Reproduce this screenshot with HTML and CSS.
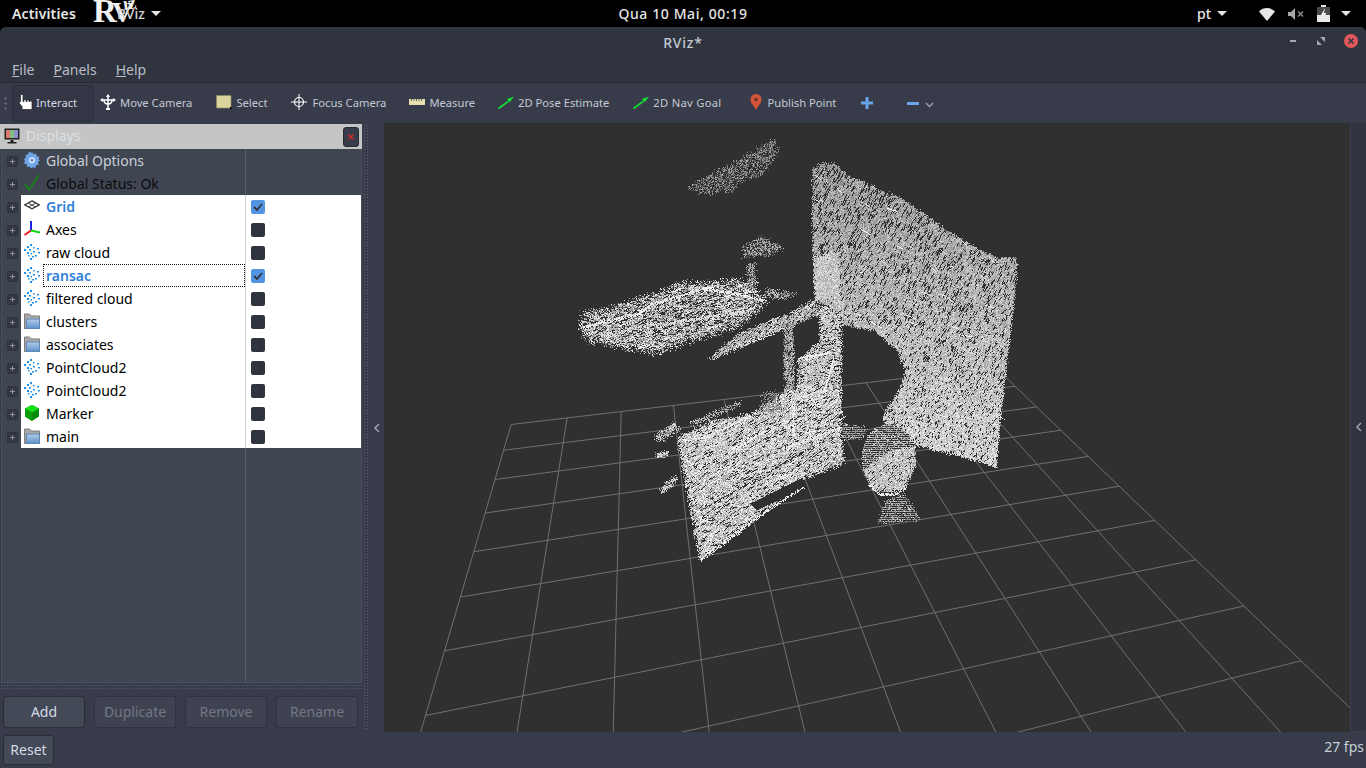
FILE: index.html
```html
<!DOCTYPE html>
<html lang="pt">
<head>
<meta charset="utf-8">
<title>RViz*</title>
<link rel="stylesheet" href="styles.css">
</head>
<body>
<svg class="defs" width="0" height="0" aria-hidden="true">
  <defs>
    <linearGradient id="g-folder" x1="0" y1="0" x2="0" y2="1"><stop offset="0" stop-color="#b4cbe6"/><stop offset="1" stop-color="#5c92cf"/></linearGradient>
  </defs>
  <symbol id="i-cloud" viewBox="0 0 16 16">
    <g fill="#1e90ee">
      <rect x="6" y="0" width="2" height="2"/><rect x="3" y="2" width="2" height="2"/><rect x="9" y="3" width="1.500" height="1.500"/><rect x="13" y="4" width="2" height="1.500"/>
      <rect x="0" y="5" width="2" height="2"/><rect x="5" y="5" width="2" height="1.500"/><rect x="14" y="8" width="2" height="1.500"/><rect x="9" y="7" width="2" height="1.500"/>
      <rect x="3" y="8" width="2" height="2"/><rect x="6.500" y="9" width="1.500" height="1.500"/><rect x="11" y="11" width="2" height="1.500"/><rect x="4" y="11" width="1.500" height="1.500"/><rect x="8" y="12" width="2" height="1.500"/><rect x="6" y="14" width="2" height="2"/>
    </g>
  </symbol>
  <symbol id="i-folder" viewBox="0 0 16 16">
    <path d="M0.500 1h5l1.500 2h8.500v12.500h-15z" fill="#a9a9a9" stroke="#7b7b7b"/>
    <rect x="2.500" y="6" width="13" height="9.500" fill="url(#g-folder)" stroke="#5f86b3"/>
  </symbol>
</svg>

<header class="topbar">
  <span class="tb-activities">Activities</span>
  <span class="tb-app">
    <span class="tb-logo"><span class="l-r">R</span><span class="l-v">V</span><span class="l-iz">iz</span></span>
    <span class="tb-appname">RViz</span>
    <span class="caret"></span>
  </span>
  <span class="tb-clock">Qua 10 Mai, 00:19</span>
  <span class="tb-right">
    <span class="tb-lang">pt</span>
    <span class="caret"></span>
    <svg class="ic-wifi" width="16" height="14" viewBox="0 0 16 14"><path d="M0 4.500A11 11 0 0 1 16 4.500L8 14z" fill="#e6e6e6"/></svg>
    <svg class="ic-vol" width="18" height="14" viewBox="0 0 18 14"><path d="M1 5h3l4-4v12l-4-4h-3z" fill="#a8a8a8"/><path d="M11 4.500l5 5m0-5l-5 5" stroke="#8a8a8a" stroke-width="1.500"/></svg>
    <svg class="ic-bat" width="13" height="17" viewBox="0 0 13 17"><path d="M4 0h5v2h4v15h-13v-15h4z" fill="#e8e8e8"/><path d="M0 2h13v8h-13z" fill="#4a4a4a"/><path d="M8 3l-4 7h2.500l-1.500 5 4.500-7h-2.500z" fill="#ededed"/></svg>
    <span class="caret"></span>
  </span>
</header>

<div class="window">
  <div class="titlebar">
    <span class="title">RViz*</span>
    <div class="winbtns">
      <span class="wb-min"></span>
      <svg class="wb-max" width="8" height="8" viewBox="0 0 8 8"><path d="M8 0v5l-5-5zM0 8v-5l5 5z" fill="#a5a8b0"/></svg>
      <svg class="wb-close" width="14" height="14" viewBox="0 0 14 14"><circle cx="7" cy="7" r="7" fill="#e0575b"/><path d="M4.500 4.500l5 5m0-5l-5 5" stroke="#2f343f" stroke-width="1.600"/></svg>
    </div>
  </div>
  <nav class="menubar">
    <span class="menu"><u>F</u>ile</span>
    <span class="menu"><u>P</u>anels</span>
    <span class="menu"><u>H</u>elp</span>
  </nav>
  <div class="toolbar">
    <span class="grip"></span>
    <span class="tool active">
      <svg width="16" height="16" viewBox="0 0 16 16"><path d="M3.500 .5h2.500v7h1v-2h2v2h1v-1.500h2v1.500h1v-.5h2v8.500h-10v-3l-2.500-3v-2h1z" fill="#fff" stroke="#222" stroke-width=".7"/></svg>
      Interact
    </span>
    <span class="tool">
      <svg width="16" height="16" viewBox="0 0 16 16"><path d="M8 1v14M1 6h14M4 6c0 3 2 4 4 4s4-1 4-4" fill="none" stroke="#fff" stroke-width="1.500"/><path d="M8 0l2 3h-4zM0 6l3-2v4zM16 6l-3-2v4z" fill="#fff"/><rect x="6" y="14" width="4" height="2" fill="#fff"/></svg>
      Move Camera
    </span>
    <span class="tool">
      <svg width="16" height="16" viewBox="0 0 16 16"><rect x=".5" y="1.500" width="14.500" height="12.500" fill="#d9d59c" stroke="#8d8a66" stroke-dasharray="2 1"/><rect x="14" y="13" width="2" height="2" fill="#111"/></svg>
      Select
    </span>
    <span class="tool gap5">
      <svg width="16" height="16" viewBox="0 0 16 16"><circle cx="8" cy="8" r="4.500" fill="none" stroke="#fff" stroke-width="1.200"/><path d="M8 0v16M0 8h16" stroke="#fff"/></svg>
      Focus Camera
    </span>
    <span class="tool tight">
      <svg width="16" height="16" viewBox="0 0 16 16"><rect x="0" y="5" width="16" height="6" fill="#e6dfae"/><path d="M2.500 5v2M5 5v2M7.500 5v2M10 5v2M12.500 5v2" stroke="#6d6a50"/></svg>
      Measure
    </span>
    <span class="tool">
      <svg width="16" height="16" viewBox="0 0 16 16"><path d="M0.500 14.500L10 7.500" stroke="#12e030" stroke-width="1.600"/><path d="M16 2.500l-7 2.500 2.500 3.500z" fill="#12e030"/></svg>
      2D Pose Estimate
    </span>
    <span class="tool wide">
      <svg width="16" height="16" viewBox="0 0 16 16"><path d="M0.500 14.500L10 7.500" stroke="#12e030" stroke-width="1.600"/><path d="M16 2.500l-7 2.500 2.500 3.500z" fill="#12e030"/></svg>
      2D Nav Goal
    </span>
    <span class="tool pin">
      <svg width="14" height="16" viewBox="0 0 14 16"><path d="M7 0a5.500 5.500 0 0 1 5.500 5.500c0 4-3.500 6-5.500 10.500c-2-4.500-5.500-6.500-5.500-10.500a5.500 5.500 0 0 1 5.500-5.500z" fill="#d2553a"/><circle cx="7" cy="5.500" r="1.800" fill="#6b3526"/></svg>
      Publish Point
    </span>
    <svg class="tb-plus" width="12" height="12" viewBox="0 0 12 12"><path d="M6 0v12M0 6h12" stroke="#6aa5ea" stroke-width="3"/></svg>
    <span class="tb-minus"></span>
    <svg class="tb-chev" width="9" height="6" viewBox="0 0 9 6"><path d="M1 1l3.500 3.500L8 1" fill="none" stroke="#9aa0ad" stroke-width="1.300"/></svg>
  </div>

  <div class="main">
    <aside class="dock">
      <div class="dock-head">
        <svg width="16" height="16" viewBox="0 0 16 16"><rect x="0.500" y="0.500" width="15" height="11" fill="#222"/><rect x="2" y="2" width="4" height="8" fill="#d87a70"/><rect x="6" y="2" width="4" height="8" fill="#83bd78"/><rect x="10" y="2" width="4" height="8" fill="#8a8fd0"/><rect x="6.500" y="12" width="3" height="2" fill="#222"/><rect x="3.500" y="14" width="9" height="1.500" fill="#222"/></svg>
        <span class="dock-title">Displays</span>
        <span class="dock-close"><svg width="6" height="6" viewBox="0 0 6 6"><path d="M.5.500l5 5m0-5l-5 5" stroke="#d82c2c" stroke-width="1.300"/></svg></span>
      </div>
      <div class="tree">
        <div class="row"><span class="gutter"><span class="exp"></span></span><span class="name">
          <svg class="ico" width="14" height="14" viewBox="0 0 14 14"><path d="M7 0l1.300 2 2.300-.6.500 2.300 2.300.5-.6 2.300L14 7.300l-1.800 1.500.6 2.300-2.300.5-.5 2.300-2.300-.6L6 14.600 5 12.600l-2.300.5-.3-2.300-2.300-.8.800-2.200L0 6.300l1.800-1.500-.5-2.300 2.300-.4.600-2.200 2.200.8z" fill="#6ea6e6"/><circle cx="7" cy="7.200" r="2.700" fill="#dbe8f7"/><circle cx="7" cy="7.200" r="1.300" fill="#5b8fd0"/></svg>
          <span class="lbl lt">Global Options</span></span><span class="cell"></span></div>
        <div class="row"><span class="gutter"><span class="exp"></span></span><span class="name">
          <svg class="ico" width="14" height="14" viewBox="0 0 14 14"><path d="M1 8l3.500 5L13 0" fill="none" stroke="#1f7a22" stroke-width="1.800"/></svg>
          <span class="lbl blk">Global Status: Ok</span></span><span class="cell"></span></div>
        <div class="row on"><span class="gutter"><span class="exp"></span></span><span class="name">
          <svg class="ico" width="14" height="14" viewBox="0 0 14 14"><path d="M7 2.500l6.500 3.500L7 9.500.5 6z" fill="none" stroke="#333" stroke-width="1.100"/><path d="M4 4.500l6 3.200M10 4.500L4 7.700" stroke="#333" stroke-width=".8"/></svg>
          <span class="lbl blue">Grid</span></span><span class="cell"><span class="chk yes"><svg width="10" height="8" viewBox="0 0 10 8"><path d="M1 4l3 3 5-6" fill="none" stroke="#2f343f" stroke-width="1.800"/></svg></span></span></div>
        <div class="row on"><span class="gutter"><span class="exp"></span></span><span class="name">
          <svg class="ico" width="16" height="16" viewBox="0 0 16 16"><path d="M7 9.500V0" stroke="#2020e0" stroke-width="2"/><path d="M7 9.500L.5 14" stroke="#e81818" stroke-width="2"/><path d="M7 9.500l9 2" stroke="#10d810" stroke-width="2"/></svg>
          <span class="lbl">Axes</span></span><span class="cell"><span class="chk"></span></span></div>
        <div class="row on"><span class="gutter"><span class="exp"></span></span><span class="name"><svg class="ico" width="16" height="16"><use href="#i-cloud"/></svg><span class="lbl">raw cloud</span></span><span class="cell"><span class="chk"></span></span></div>
        <div class="row on"><span class="gutter"><span class="exp"></span></span><span class="name"><svg class="ico" width="16" height="16"><use href="#i-cloud"/></svg><span class="lbl blue focus">ransac</span></span><span class="cell"><span class="chk yes"><svg width="10" height="8" viewBox="0 0 10 8"><path d="M1 4l3 3 5-6" fill="none" stroke="#2f343f" stroke-width="1.800"/></svg></span></span></div>
        <div class="row on"><span class="gutter"><span class="exp"></span></span><span class="name"><svg class="ico" width="16" height="16"><use href="#i-cloud"/></svg><span class="lbl">filtered cloud</span></span><span class="cell"><span class="chk"></span></span></div>
        <div class="row on"><span class="gutter"><span class="exp"></span></span><span class="name"><svg class="ico" width="16" height="16"><use href="#i-folder"/></svg><span class="lbl">clusters</span></span><span class="cell"><span class="chk"></span></span></div>
        <div class="row on"><span class="gutter"><span class="exp"></span></span><span class="name"><svg class="ico" width="16" height="16"><use href="#i-folder"/></svg><span class="lbl">associates</span></span><span class="cell"><span class="chk"></span></span></div>
        <div class="row on"><span class="gutter"><span class="exp"></span></span><span class="name"><svg class="ico" width="16" height="16"><use href="#i-cloud"/></svg><span class="lbl">PointCloud2</span></span><span class="cell"><span class="chk"></span></span></div>
        <div class="row on"><span class="gutter"><span class="exp"></span></span><span class="name"><svg class="ico" width="16" height="16"><use href="#i-cloud"/></svg><span class="lbl">PointCloud2</span></span><span class="cell"><span class="chk"></span></span></div>
        <div class="row on"><span class="gutter"><span class="exp"></span></span><span class="name">
          <svg class="ico" width="16" height="16" viewBox="0 0 16 16"><path d="M8 0l7 3.500v8L8 16l-7-4.500v-8z" fill="#0a8a0a"/><path d="M8 0l7 3.500L8 7.500 1 3.500z" fill="#16e016"/><path d="M8 7.500V16l-7-4.500v-8z" fill="#0c9c0c"/></svg>
          <span class="lbl">Marker</span></span><span class="cell"><span class="chk"></span></span></div>
        <div class="row on"><span class="gutter"><span class="exp"></span></span><span class="name"><svg class="ico" width="16" height="16"><use href="#i-folder"/></svg><span class="lbl">main</span></span><span class="cell"><span class="chk"></span></span></div>
        <div class="row filler"><span class="gutter"></span><span class="name"></span><span class="cell"></span></div>
      </div>
      <div class="hgrip"></div>
      <div class="dock-btns">
        <button class="btn primary">Add</button>
        <button class="btn off">Duplicate</button>
        <button class="btn off">Remove</button>
        <button class="btn off">Rename</button>
      </div>
    </aside>
    <div class="splitter"><span class="vgrip"></span><span class="strip"><svg width="7" height="10" viewBox="0 0 7 10"><path d="M6 1L2 5l4 4" fill="none" stroke="#9aa0ad" stroke-width="1.600"/></svg></span></div>
    <canvas id="view" class="view" width="966" height="609"></canvas>
    <div class="rstrip"><svg width="7" height="10" viewBox="0 0 7 10"><path d="M6 1L2 5l4 4" fill="none" stroke="#9aa0ad" stroke-width="1.600"/></svg></div>
  </div>

  <footer class="status">
    <button class="btn primary reset">Reset</button>
    <span class="fps">27 fps</span>
  </footer>
</div>
<script src="view.js"></script>
</body>
</html>
```
FILE: styles.css
```css
* { box-sizing: border-box; }
html, body { margin: 0; height: 100%; }
body {
  width: 1366px; height: 768px; overflow: hidden; background: #000;
  font-family: "Noto Sans", "Open Sans", sans-serif; color: #d3dae3;
  display: flex; flex-direction: column;
}
.defs { position: absolute; }

.topbar {
  height: 27px; flex: none; background: #000; color: #e6e6e6; position: relative;
  display: flex; align-items: center; font-size: 14px; font-weight: 600; padding-left: 12px;
}
.tb-activities { letter-spacing: .15px; }
.tb-app { position: relative; display: flex; align-items: center; margin-left: 41px; }
.tb-appname { font-weight: 500; color: #d5d5d5; font-size: 14px; position: relative; }
.tb-logo {
  position: absolute; left: -24px; top: -11px; width: 46px; height: 27px; display: block; white-space: nowrap;
  font-family: "Liberation Serif", serif; font-weight: 700; color: #f2f2f2;
}
.l-r { font-size: 33px; }
.l-v { font-size: 30px; margin-left: -5px; }
.l-iz { font-size: 18px; position: absolute; left: 30px; top: 0; transform: rotate(-8deg); }
.caret {
  width: 0; height: 0; border-left: 5px solid transparent; border-right: 5px solid transparent;
  border-top: 5px solid #e6e6e6; margin-left: 6px; display: inline-block;
}
.tb-clock { position: absolute; left: 0; right: 0; text-align: center; font-weight: 500; letter-spacing: .6px; pointer-events: none; }
.tb-right { margin-left: auto; display: flex; align-items: center; padding-right: 15px; position: relative; }
.tb-lang { font-weight: 500; }
.ic-wifi { margin-left: 32px; }
.ic-vol { margin-left: 12px; }
.ic-bat { margin-left: 12px; }
.tb-right .caret:last-child { margin-left: 11px; }

.window { flex: 1; display: flex; flex-direction: column; background: #383c4a; border-radius: 6px 6px 0 0; overflow: hidden; min-height: 0; }
.titlebar { height: 30px; flex: none; background: #2f343f; position: relative; display: flex; align-items: center; justify-content: center; }
.title { font-size: 14px; font-weight: 500; color: #c4c9d2; letter-spacing: .8px; }
.winbtns { position: absolute; right: 8px; top: 7px; display: flex; align-items: center; }
.wb-min { width: 6px; height: 2px; background: #a5a8b0; }
.wb-max { margin-left: 21px; }
.wb-close { margin-left: 19px; }
.menubar { height: 25px; flex: none; background: #2f343f; display: flex; align-items: center; padding-left: 12px; font-size: 14px; gap: 19px; }
.menu { color: #b9bec8; }
.toolbar {
  height: 41px; flex: none; background: #383c4a; border-top: 1px solid #262a33;
  display: flex; align-items: center; padding-left: 4px; font-size: 11.200px; color: #c3cad5; position: relative;
}
.grip { width: 3px; height: 14px; margin-right: 5px; background: radial-gradient(circle, #5d6270 1px, transparent 1.200px) 0 0 / 3px 5px; }
.tool { display: flex; align-items: center; gap: 4px; height: 37px; padding: 0 12px 2px; white-space: nowrap; }
.tool.active { width: 82px; padding: 0 0 2px 4px; gap: 3px; background: #333745; border: 1px solid #2b2f3b; border-radius: 3px; margin-right: -6px; color: #d3dae3; }
.tool.gap5 { gap: 5px; padding-right: 11px; }
.tool.tight { padding-right: 11px; }
.tool.wide { letter-spacing: .3px; }
.tool.pin { padding: 0 12px 2px 15px; gap: 5px; }
.tb-plus { margin-left: 13px; }
.tb-minus { width: 12px; height: 3px; background: #6aa5ea; margin-left: 34px; }
.tb-chev { margin-left: 6px; margin-top: 3px; }

.main { height: 609px; flex: none; display: flex; }
.dock { width: 362px; flex: none; display: flex; flex-direction: column; }
.dock-head { height: 25px; flex: none; background: #c5c5c5; margin-top: 1px; display: flex; align-items: center; padding: 0 0 2px 4px; position: relative; }
.dock-title { font-size: 14px; color: #dbe0e6; margin-left: 6px; }
.dock-close { width: 16px; height: 20px; margin: 2px 3px 0 auto; background: #383c4a; border: 1px solid #262a33; border-radius: 3px; display: flex; align-items: center; justify-content: center; }
.tree { flex: 1; min-height: 0; margin-left: 1px; background: #404552; border: solid #4a4f5f; border-width: 0 1px 1px 1px; display: flex; flex-direction: column; width: 361px; }
.row { height: 23px; flex: none; display: flex; font-size: 14px; }
.row.filler { flex: 1; height: auto; }
.gutter { width: 19px; flex: none; background: #404552; display: flex; align-items: center; padding-left: 5px; }
.exp { width: 11px; height: 11px; margin-top: 1px; background: #333744; border-radius: 2px; position: relative; border: 1px solid #2f3340; }
.exp::before { content: ""; position: absolute; left: 2px; top: 4px; width: 5px; height: 1px; background: #8c919e; }
.exp::after { content: ""; position: absolute; left: 4px; top: 2px; width: 1px; height: 5px; background: #8c919e; }
.name { width: 224px; flex: none; display: flex; align-items: center; position: relative; padding-left: 3px; color: #000; }
.ico { flex: none; width: 16px; height: 16px; margin-top: -2px; }
.lbl { margin-left: 6px; white-space: nowrap; }
.lt { color: #c9d0da; }
.blk { color: #0c0c0c; }
.blue { color: #2f80d8; font-weight: 600; }
.focus::after { content: ""; position: absolute; left: 22px; right: 0; top: 0; bottom: 0; border: 1px dotted #111; }
.cell { flex: 1; border-left: 1px solid #565b69; display: flex; align-items: center; padding-left: 5px; }
.on .name, .on .cell { background: #fff; }
.on .cell { border-left-color: #d4d4d4; }
.chk { width: 14px; height: 14px; background: #2f343f; border-radius: 2px; display: flex; align-items: center; justify-content: center; }
.chk.yes { background: #5294e2; }
.hgrip { height: 5px; flex: none; margin: 1px 0 0 0; background: radial-gradient(circle, #5a5f70 .7px, transparent 1px) 0 0 / 3px 3px; }
.dock-btns { height: 43px; flex: none; display: flex; gap: 9px; padding: 7px 0 0 3px; }
.btn { height: 32px; width: 82px; font: 14px "Noto Sans", "Open Sans", sans-serif; border-radius: 3px; padding: 0 0 1px; }
.primary { background: #444958; border: 1px solid #2b2e39; color: #d3dae3; }
.off { background: #3e4251; border: 1px solid #2f3240; color: #727884; }

.splitter { width: 22px; flex: none; display: flex; }
.vgrip { width: 5px; margin-top: 1px; margin-bottom: 2px; margin-left: 1px; background: radial-gradient(circle, #5a5f70 .7px, transparent 1px) 0 0 / 3px 3px; }
.strip { flex: 1; display: flex; align-items: center; justify-content: center; }
.view { width: 966px; height: 609px; flex: none; display: block; background: #303030; }
.rstrip { flex: 1; background: #303441; border: 1px solid #3c4150; border-width: 0 0 1px 1px; border-radius: 0 0 3px 3px; display: flex; align-items: center; justify-content: center; }

.status { height: 36px; flex: none; display: flex; align-items: center; padding: 0 2px 0 3px; justify-content: space-between; }
.reset { width: 51px; height: 30px; }
.fps { font-size: 14px; color: #c9d0da; margin-bottom: 8px; }
```
FILE: view.js
```js
(function () {
  var cv = document.getElementById('view');
  var ctx = cv.getContext('2d');
  var OX = 384, OY = 123, W = cv.width, H = cv.height, BG = [48, 48, 48];
  ctx.fillStyle = '#303030';
  ctx.fillRect(0, 0, W, H);

  /* grid: homography from four measured corners of a 10 x 7 block of cells */
  function homography(p) {
    var x0 = p[0][0], y0 = p[0][1], x1 = p[1][0], y1 = p[1][1],
        x2 = p[2][0], y2 = p[2][1], x3 = p[3][0], y3 = p[3][1];
    var dx1 = x1 - x2, dx2 = x3 - x2, sx = x0 - x1 + x2 - x3,
        dy1 = y1 - y2, dy2 = y3 - y2, sy = y0 - y1 + y2 - y3;
    var d = dx1 * dy2 - dx2 * dy1;
    var g = (sx * dy2 - dx2 * sy) / d, h = (dx1 * sy - sx * dy1) / d;
    var a = x1 - x0 + g * x1, b = x3 - x0 + h * x3, c = x0,
        e = y1 - y0 + g * y1, f = y3 - y0 + h * y3;
    return function (u, v) {
      var w = g * u + h * v + 1;
      return [(a * u + b * v + c) / w, (e * u + f * v + y0) / w];
    };
  }
  var H0 = homography([[510.7, 424], [995, 367], [1195.3, 559.3], [425, 715]]);
  function G(i, j) { return H0(i / 10, j / 7); }
  ctx.save();
  ctx.translate(-OX + 0.5, -OY + 0.5);
  ctx.strokeStyle = '#707070';
  ctx.lineWidth = 1;
  for (var k = 0; k <= 10; k++) {
    var a = G(k, 0), b = G(k, 10), c = G(0, k), d = G(10, k);
    ctx.beginPath(); ctx.moveTo(a[0], a[1]); ctx.lineTo(b[0], b[1]); ctx.stroke();
    ctx.beginPath(); ctx.moveTo(c[0], c[1]); ctx.lineTo(d[0], d[1]); ctx.stroke();
  }
  ctx.restore();

  /* point cloud, seeded so that every run gives the same picture */
  var seed = 1337;
  function R() {
    seed |= 0; seed = seed + 0x6D2B79F5 | 0;
    var t = Math.imul(seed ^ seed >>> 15, 1 | seed);
    t = t + Math.imul(t ^ t >>> 7, 61 | t) ^ t;
    return ((t ^ t >>> 14) >>> 0) / 4294967296;
  }
  var img = ctx.getImageData(0, 0, W, H), D = img.data;
  function put(x, y, r, g, b) {
    x = Math.round(x) - OX; y = Math.round(y) - OY;
    if (x < 0 || y < 0 || x >= W || y >= H) return;
    var i = (y * W + x) * 4;
    D[i] = r; D[i + 1] = g; D[i + 2] = b;
  }
  function inPoly(px, py, P) {
    var ins = false;
    for (var i = 0, j = P.length - 1; i < P.length; j = i++) {
      if ((P[i][1] > py) !== (P[j][1] > py) &&
          px < (P[j][0] - P[i][0]) * (py - P[i][1]) / (P[j][1] - P[i][1]) + P[i][0]) ins = !ins;
    }
    return ins;
  }
  function seg(x0, y0, x1, y1, fn) {
    var n = Math.max(Math.abs(x1 - x0), Math.abs(y1 - y0), 1);
    for (var i = 0; i <= n; i++) fn(x0 + (x1 - x0) * i / n, y0 + (y1 - y0) * i / n);
  }
  /* s: poly, den, lo, hi, jit, dash (count), dlen, ang, taper, streak, sang */
  function shape(s) {
    var P = s.poly, minx = 1e9, maxx = -1e9, miny = 1e9, maxy = -1e9, j = s.jit === undefined ? 2 : s.jit;
    P.forEach(function (q) { minx = Math.min(minx, q[0]); maxx = Math.max(maxx, q[0]); miny = Math.min(miny, q[1]); maxy = Math.max(maxy, q[1]); });
    minx = Math.floor(minx - j); miny = Math.floor(miny - j);
    maxx = Math.ceil(maxx + j); maxy = Math.ceil(maxy + j);
    var inside = [];
    for (var y = miny; y <= maxy; y++) for (var x = minx; x <= maxx; x++) {
      var jx = x + (R() - .5) * 2 * j, jy = y + (R() - .5) * 2 * j;
      if (!inPoly(jx, jy, P)) continue;
      inside.push([x, y]);
      if (s.rows && (y % 2 === 0) && R() < .75) { put(x, y, BG[0], BG[1], BG[2]); continue; }
      if (R() > s.den) continue;
      var lift = s.lift ? s.lift * (y - miny) / (maxy - miny) : 0;
      var v = s.lo + lift + (s.hi - s.lo) * R();
      v = Math.min(255, v);
      put(x, y, v, v, v);
    }
    var n = s.dash || 0, ang = s.ang === undefined ? -0.9 : s.ang;
    for (var i = 0; i < n && inside.length; i++) {
      var q = inside[Math.floor(R() * inside.length)];
      var tp = s.taper ? 1.25 - (q[1] - miny) / (maxy - miny) : 1;
      var len = (s.dlen || 3) * (0.5 + R()) * tp;
      var a2 = ang + (R() - .5) * .5;
      var tx = Math.cos(a2) * len, ty = Math.sin(a2) * len;
      seg(q[0], q[1], q[0] + tx, q[1] + ty, function (x, y) { put(x, y, BG[0], BG[1], BG[2]); });
    }
    var m = s.streak || 0, sa = s.sang === undefined ? -.4 : s.sang;
    for (var i2 = 0; i2 < m && inside.length; i2++) {
      var q2 = inside[Math.floor(R() * inside.length)];
      var l2 = 4 + R() * 10, a3 = sa + (R() - .5) * .7, u0 = 215 + R() * 40;
      seg(q2[0], q2[1], q2[0] + Math.cos(a3) * l2, q2[1] + Math.sin(a3) * l2, function (x, y) {
        if (R() < .85) put(x, y, u0, u0, u0);
      });
    }
  }
  function bright(path, w, v) {
    for (var i = 0; i < path.length - 1; i++) {
      seg(path[i][0], path[i][1], path[i + 1][0], path[i + 1][1], function (x, y) {
        for (var t = 0; t < 3; t++) {
          var u = v - R() * 35;
          put(x + (R() - .5) * w, y + (R() - .5) * w, u, u, u);
        }
      });
    }
  }
  function dark(poly) {
    var minx = 1e9, maxx = -1e9, miny = 1e9, maxy = -1e9;
    poly.forEach(function (q) { minx = Math.min(minx, q[0]); maxx = Math.max(maxx, q[0]); miny = Math.min(miny, q[1]); maxy = Math.max(maxy, q[1]); });
    for (var y = miny; y <= maxy; y++) for (var x = minx; x <= maxx; x++) if (inPoly(x, y, poly)) put(x, y, BG[0], BG[1], BG[2]);
  }

  /* far sparse cloud */
  shape({ poly: [[687, 187], [705, 176], [737, 160], [760, 146], [773, 139], [778, 150], [762, 175], [745, 180], [730, 192], [698, 193]], den: .62, lo: 80, hi: 175, jit: 2.500, dash: 90, dlen: 3 });
  /* main wall */
  shape({ poly: [[812, 167], [820, 163], [833, 162], [850, 176], [872, 185], [905, 200], [943, 227], [975, 247], [997, 257], [1017, 257], [1015, 290], [1008, 350], [1000, 420], [996, 467], [963, 457], [935, 450], [917, 445], [883, 422], [883, 413], [897, 393], [905, 373], [897, 350], [873, 330], [843, 325], [838, 310], [815, 300], [812, 250]], den: .98, lo: 115, hi: 195, lift: 55, jit: 1.500, dash: 1800, dlen: 4, ang: -1.050, taper: true, streak: 50, sang: .5 });
  /* shelf cloud on the left */
  shape({ poly: [[578, 327], [582, 313], [615, 306], [643, 297], [680, 283], [743, 280], [767, 300], [750, 318], [730, 330], [687, 342], [657, 353], [620, 347], [587, 340]], den: .9, lo: 110, hi: 250, jit: 4, dash: 500, dlen: 3, ang: -.3, streak: 40 });
  bright([[583, 327], [640, 313], [650, 305], [703, 288], [733, 293], [763, 300]], 2.500, 255);
  bright([[600, 335], [650, 325], [700, 318], [745, 312]], 3, 235);
  /* small clouds */
  shape({ poly: [[742, 247], [760, 235], [783, 247], [770, 255], [743, 257]], den: .6, lo: 100, hi: 200, jit: 2.500 });
  shape({ poly: [[747, 263], [755, 263], [756, 290], [746, 290]], den: .7, lo: 100, hi: 200, jit: 2 });
  shape({ poly: [[763, 288], [797, 293], [783, 300], [767, 296]], den: .7, lo: 110, hi: 215, jit: 2 });
  /* bar, posts */
  shape({ poly: [[707, 360], [735, 335], [790, 312], [815, 298], [818, 315], [790, 325], [745, 345], [715, 358]], den: .92, lo: 130, hi: 235, jit: 2, dash: 50, dlen: 3, streak: 14 });
  shape({ poly: [[813, 257], [838, 250], [840, 300], [815, 300]], den: .98, lo: 160, hi: 235, jit: 2 });
  shape({ poly: [[818, 305], [842, 305], [840, 400], [797, 400], [797, 360], [820, 340]], den: .92, lo: 140, hi: 245, jit: 2, dash: 80, dlen: 3, ang: -.4 });
  dark([[793, 330], [817, 322], [818, 338], [800, 350], [793, 356]]);
  shape({ poly: [[783, 322], [793, 322], [794, 395], [784, 395]], den: .85, lo: 110, hi: 215, jit: 1.500, dash: 20, dlen: 2 });
  bright([[800, 358], [830, 352]], 2, 255);
  bright([[823, 395], [833, 360]], 2, 255);
  bright([[798, 385], [823, 390]], 2, 240);
  /* board */
  shape({ poly: [[677, 437], [712, 420], [753, 413], [787, 390], [840, 390], [843, 463], [805, 478], [753, 520], [700, 560], [688, 500]], den: .99, lo: 140, hi: 255, jit: 2.500, dash: 800, dlen: 2.500, ang: -.55, streak: 130, sang: -.5 });
  seg(700, 510, 823, 440, function (x, y) { if (R() < .7) put(x, y, BG[0], BG[1], BG[2]); if (R() < .4) put(x, y + 1, BG[0], BG[1], BG[2]); });
  dark([[750, 503], [803, 477], [800, 488], [757, 510]]);
  bright([[753, 520], [787, 497], [803, 487]], 2, 255);
  bright([[700, 560], [753, 520]], 3, 255);
  bright([[683, 440], [705, 437], [750, 415]], 2, 250);
  bright([[733, 450], [763, 432]], 2, 255);
  bright([[793, 407], [793, 435]], 1.500, 255);
  bright([[787, 447], [840, 427]], 2, 250);
  bright([[790, 400], [823, 390]], 2, 245);
  /* wisps */
  shape({ poly: [[690, 421], [740, 400], [739, 405], [692, 426]], den: .7, lo: 110, hi: 220, jit: 2 });
  shape({ poly: [[653, 436], [675, 420], [680, 430], [660, 441]], den: .7, lo: 130, hi: 240, jit: 2 });
  shape({ poly: [[655, 453], [667, 450], [668, 455], [657, 458]], den: .85, lo: 150, hi: 245, jit: 1.500 });
  shape({ poly: [[658, 490], [675, 473], [677, 480], [663, 494]], den: .75, lo: 140, hi: 240, jit: 1.500 });
  shape({ poly: [[760, 395], [775, 390], [783, 410], [760, 415]], den: .6, lo: 100, hi: 190, jit: 2 });
  /* block, vase, base */
  shape({ poly: [[840, 423], [867, 427], [863, 438], [843, 440]], den: .9, lo: 120, hi: 205, jit: 1.500, rows: true });
  var vase = [];
  for (var t = 0; t < 32; t++) vase.push([888 + 27 * Math.cos(t / 32 * 6.283), 458 + 35 * Math.sin(t / 32 * 6.283)]);
  shape({ poly: vase, den: .97, lo: 120, hi: 225, jit: 1, rows: true });
  shape({ poly: [[862, 470], [873, 490], [903, 490], [916, 462], [914, 445], [890, 450]], den: .95, lo: 150, hi: 240, jit: 1.500, dash: 40, dlen: 2 });
  bright([[868, 484], [880, 494], [895, 494], [905, 487]], 2, 255);
  shape({ poly: [[877, 523], [885, 500], [903, 493], [922, 520]], den: .9, lo: 110, hi: 215, jit: 1.500, rows: true });

  ctx.putImageData(img, 0, 0);
})();
```
